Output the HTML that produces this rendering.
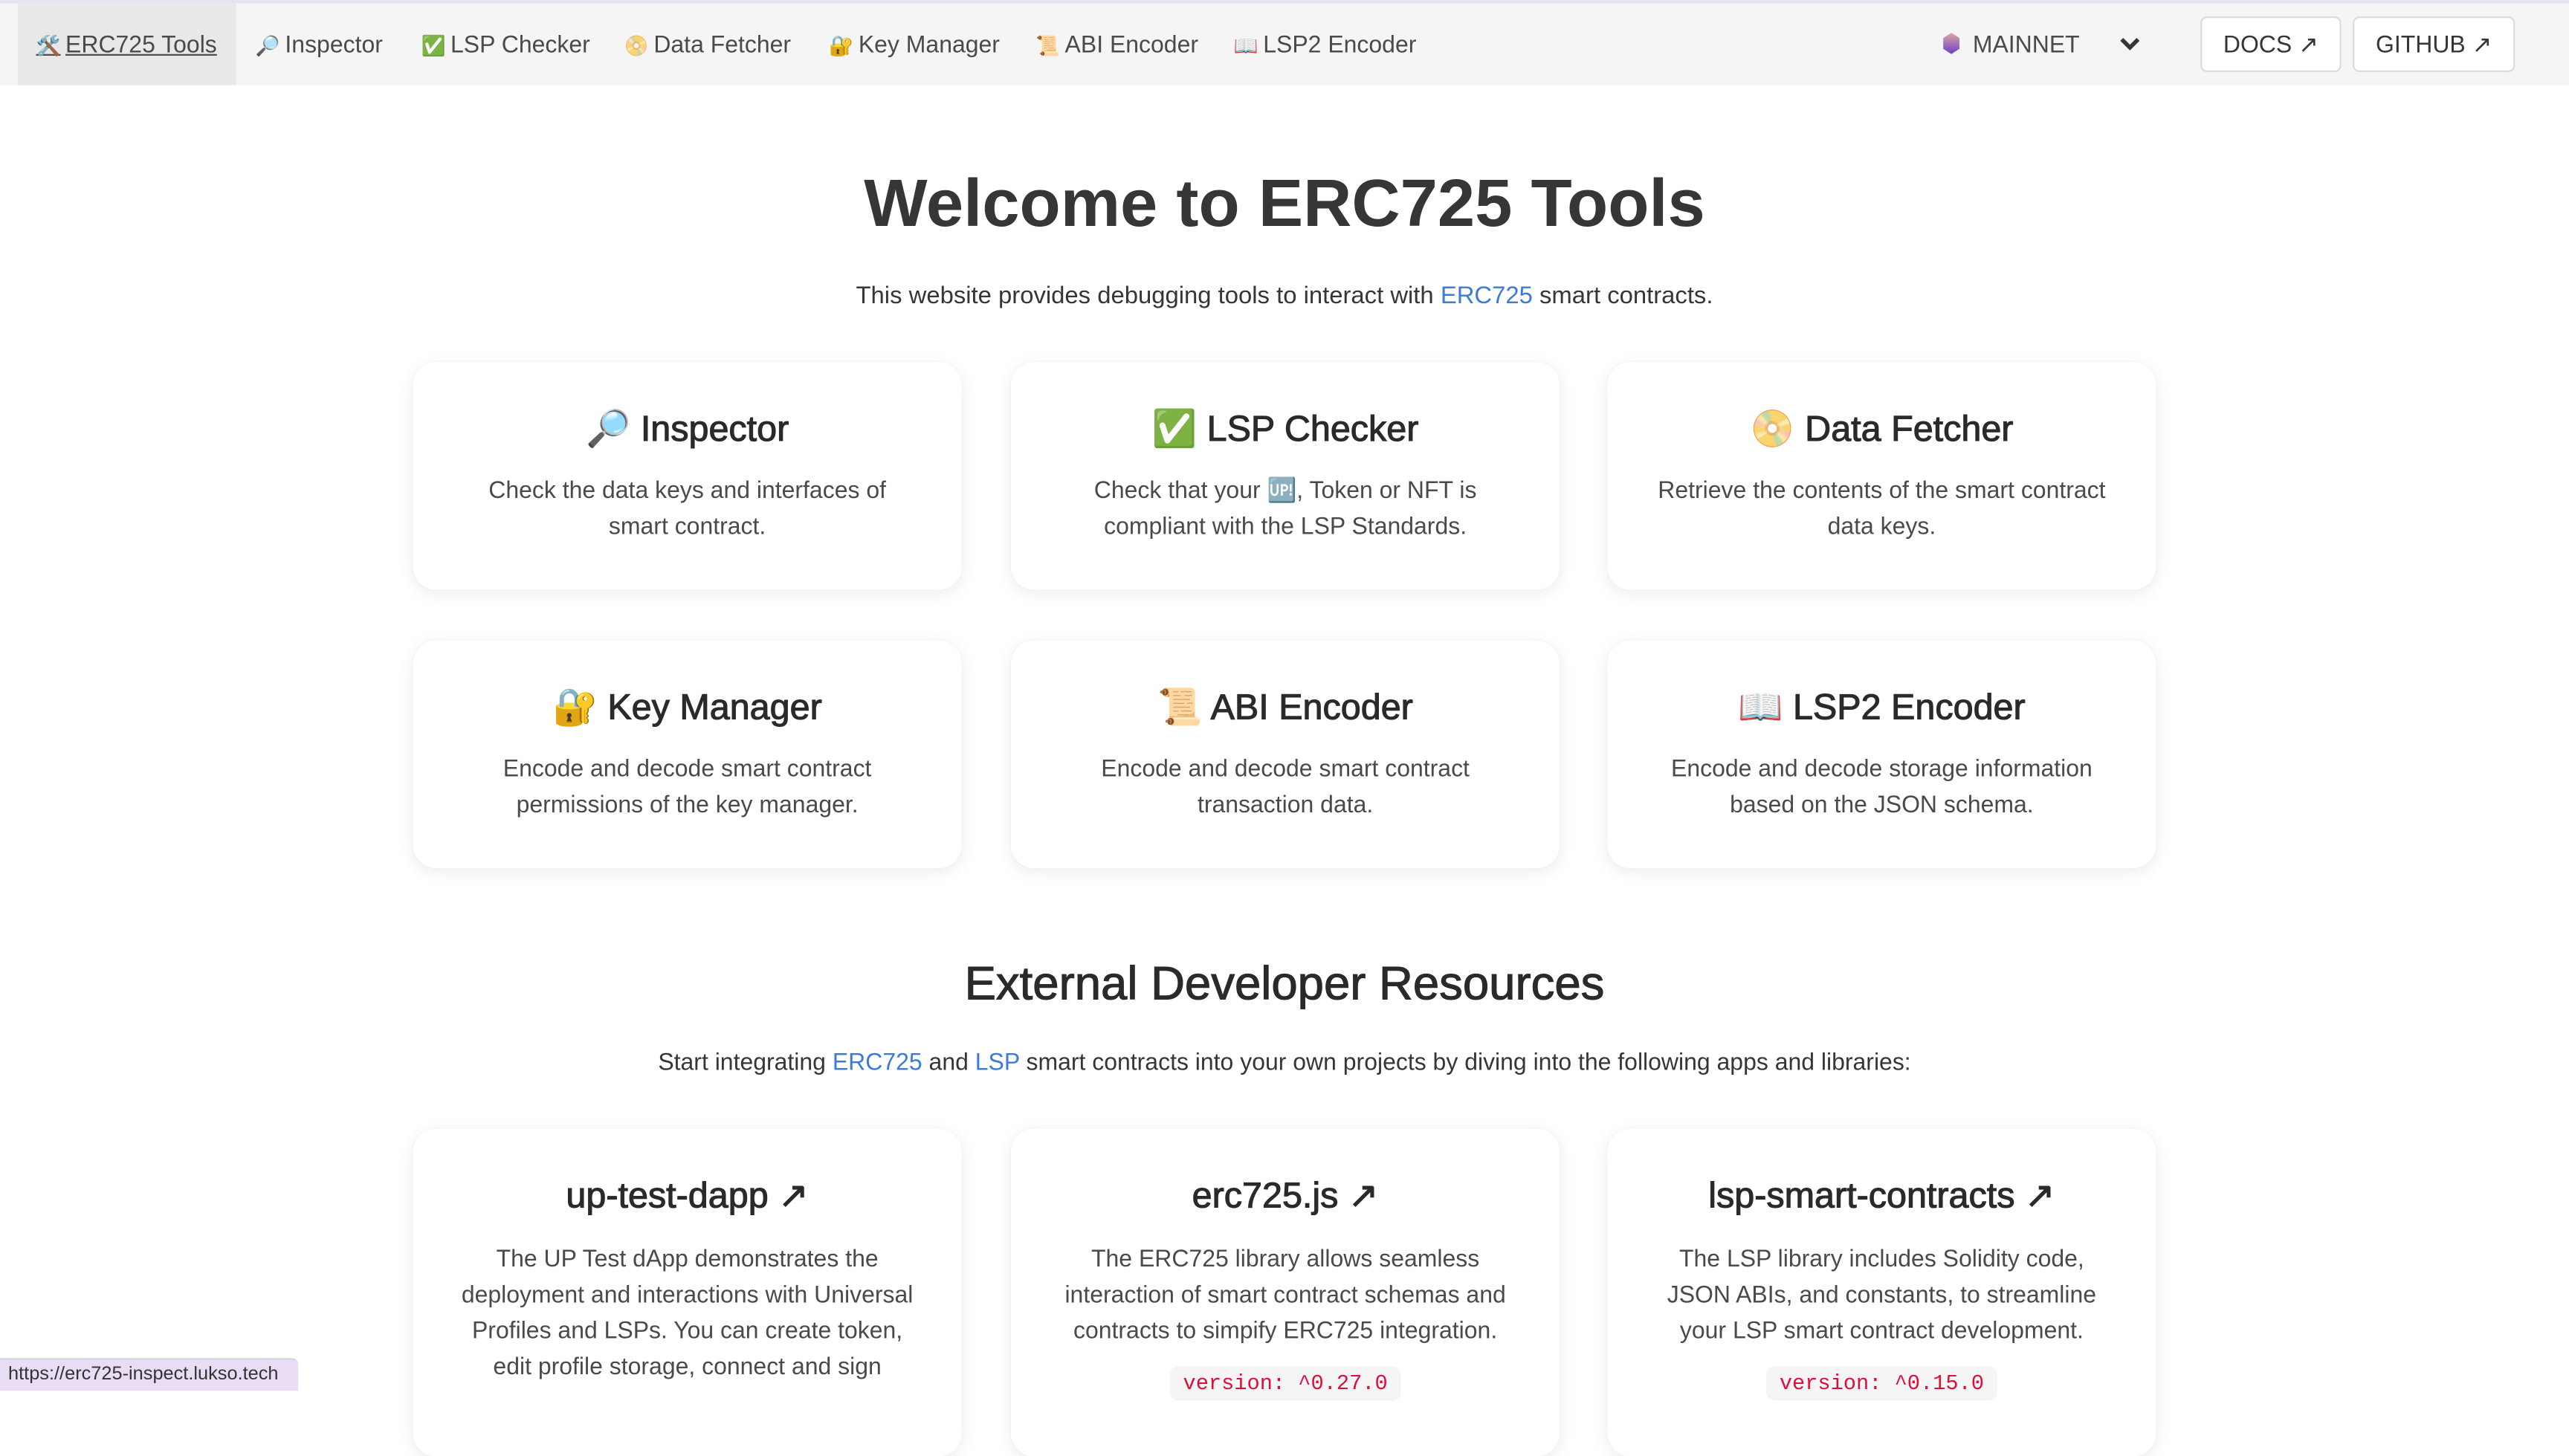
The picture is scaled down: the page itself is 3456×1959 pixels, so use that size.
<!DOCTYPE html>
<html><head><meta charset="utf-8"><style>
html,body{margin:0;padding:0;width:3456px;height:1870px;overflow:hidden;background:#fff}
#s{position:absolute;left:0;top:0;width:1568px;height:849px;transform:scale(2.2041);transform-origin:0 0;font-family:"Liberation Sans","DejaVu Sans",sans-serif;color:#363636}
.nav{position:absolute;left:0;top:0;width:1568px;height:52px;background:#f5f5f5;border-top:2px solid #e9e3ee;box-sizing:border-box}
.ni{position:absolute;top:1px;height:50px;line-height:50px;font-size:14.5px;color:#4a4a4a;white-space:nowrap}
.ni i{font-style:normal;font-size:12px;margin-right:3px}
.btn{position:absolute;top:8px;height:34px;line-height:34px;border:1px solid #dbdbdb;border-radius:4px;background:#fff;font-size:14.5px;text-align:center;color:#363636;box-sizing:border-box}
.c{position:absolute;width:335px;background:#fff;border-radius:14px;box-shadow:0 2px 10px rgba(0,0,0,.08),0 0 1px rgba(0,0,0,.05);text-align:center}
.c h3{margin:27px 0 0;font-size:22px;font-weight:normal;line-height:28px;color:#2a2a2a;-webkit-text-stroke:0.5px #2a2a2a}
.c p{margin:13px 30px 0;font-size:14.5px;line-height:22px;color:#4a4a4a}
.ctr{position:absolute;left:0;width:1568px;text-align:center}
a{color:#3e7bd6;text-decoration:none}
code{font-family:"Liberation Mono",monospace;color:#da1039;background:#f5f5f5;padding:3px 8px;border-radius:5px;font-size:13px}
</style></head><body><div id="s">
<div class="nav">
<div style="position:absolute;left:11px;top:0;width:133px;height:50px;background:#e8e8e8"></div>
<div class="ni" style="left:22px;text-decoration:underline"><i>🛠️</i>ERC725 Tools</div>
<div class="ni" style="left:156px"><i>🔎</i>Inspector</div>
<div class="ni" style="left:257px"><i>✅</i>LSP Checker</div>
<div class="ni" style="left:381px"><i>📀</i>Data Fetcher</div>
<div class="ni" style="left:506px"><i>🔐</i>Key Manager</div>
<div class="ni" style="left:632px"><i>📜</i>ABI Encoder</div>
<div class="ni" style="left:753px"><i>📖</i>LSP2 Encoder</div>
<div class="ni" style="left:1186px"><span style="display:inline-block;width:10px;height:13px;background:linear-gradient(#e0a6a6,#6b3fc7);clip-path:polygon(50% 0,100% 25%,100% 75%,50% 100%,0 75%,0 25%);vertical-align:-1px"></span>&nbsp;&nbsp;MAINNET</div>
<div class="ni" style="left:1293px"><svg width="14" height="10" viewBox="0 0 14 10"><path d="M2 2l5 5 5-5" stroke="#363636" stroke-width="2.5" fill="none"/></svg></div>
<div class="btn" style="left:1343px;width:86px">DOCS ↗</div>
<div class="btn" style="left:1436px;width:99px">GITHUB ↗</div>
</div>
<div class="ctr" style="top:98px;font-size:41px;font-weight:bold;line-height:52px;color:#363636">Welcome to ERC725 Tools</div>
<div class="ctr" style="top:171px;font-size:14.9px;line-height:20px">This website provides debugging tools to interact with <a>ERC725</a> smart contracts.</div>
<div class="c" style="left:252px;top:221px;height:139px"><h3>🔎 Inspector</h3><p style="margin:13px 42px 0">Check the data keys and interfaces of smart contract.</p></div>
<div class="c" style="left:617px;top:221px;height:139px"><h3>✅ LSP Checker</h3><p>Check that your 🆙, Token or NFT is compliant with the LSP Standards.</p></div>
<div class="c" style="left:981px;top:221px;height:139px"><h3>📀 Data Fetcher</h3><p style="margin:13px 20px 0">Retrieve the contents of the smart contract data keys.</p></div>
<div class="c" style="left:252px;top:391px;height:139px"><h3>🔐 Key Manager</h3><p>Encode and decode smart contract permissions of the key manager.</p></div>
<div class="c" style="left:617px;top:391px;height:139px"><h3>📜 ABI Encoder</h3><p>Encode and decode smart contract transaction data.</p></div>
<div class="c" style="left:981px;top:391px;height:139px"><h3>📖 LSP2 Encoder</h3><p style="margin:13px 20px 0">Encode and decode storage information based on the JSON schema.</p></div>
<div class="ctr" style="top:583px;font-size:28.8px;line-height:36px;color:#2a2a2a;-webkit-text-stroke:0.5px #2a2a2a">External Developer Resources</div>
<div class="ctr" style="top:639px;font-size:14.5px;line-height:20px">Start integrating <a>ERC725</a> and <a>LSP</a> smart contracts into your own projects by diving into the following apps and libraries:</div>
<div class="c" style="left:252px;top:689px;height:200px"><h3>up-test-dapp ↗</h3><p style="margin:14px 28px 0">The UP Test dApp demonstrates the deployment and interactions with Universal Profiles and LSPs. You can create token, edit profile storage, connect and sign</p></div>
<div class="c" style="left:617px;top:689px;height:200px"><h3>erc725.js ↗</h3><p style="margin:14px 30px 0">The ERC725 library allows seamless interaction of smart contract schemas and contracts to simpify ERC725 integration.</p><div style="margin-top:11px"><code>version: ^0.27.0</code></div></div>
<div class="c" style="left:981px;top:689px;height:200px"><h3>lsp-smart-contracts ↗</h3><p style="margin:14px 26px 0">The LSP library includes Solidity code, JSON ABIs, and constants, to streamline your LSP smart contract development.</p><div style="margin-top:11px"><code>version: ^0.15.0</code></div></div>
<div style="position:absolute;left:0;top:829px;width:182px;height:20px;background:#e9ddf5;border-radius:0 4px 0 0;border-top:1px solid #d8d0e0;font-size:11.5px;line-height:19px;padding-left:5px;box-sizing:border-box;color:#333">https://erc725-inspect.lukso.tech</div>
</div></body></html>
